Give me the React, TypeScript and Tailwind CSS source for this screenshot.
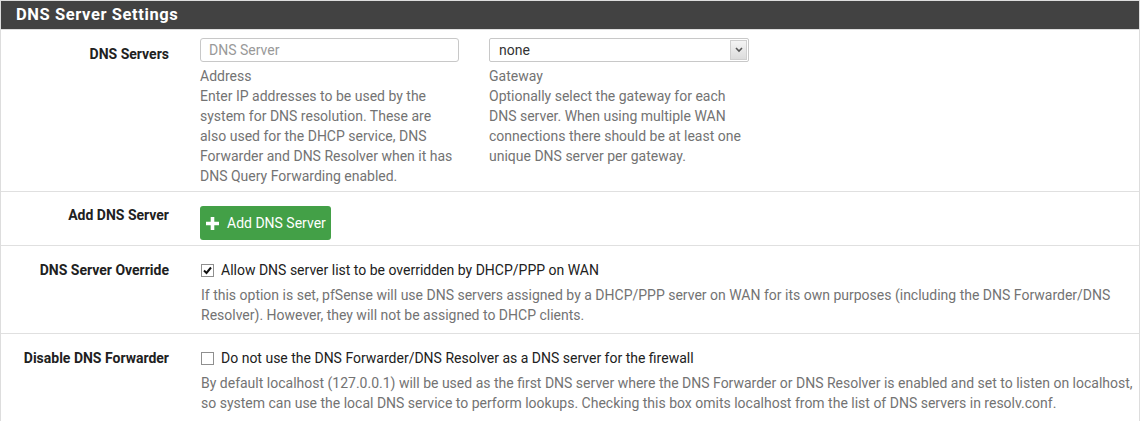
const font = { fontFamily: "Roboto, 'Liberation Sans', sans-serif" };

function Label({ children, pt }: { children: string; pt: string }) {
  return (
    <div className={`w-[183px] shrink-0 pr-[15px] text-right text-[14px] font-bold leading-5 text-[#212121] ${pt}`}>
      {children}
    </div>
  );
}

function Check({ checked }: { checked?: boolean }) {
  return (
    <span className="flex h-[13px] w-[13px] shrink-0 items-center justify-center border border-[#8f8f8f] bg-white">
      {checked && (
        <svg width="9" height="9" viewBox="0 0 9 9">
          <path d="M1 4.5 L3.5 7 L8 1.5" fill="none" stroke="#111" strokeWidth="2" />
        </svg>
      )}
    </span>
  );
}

export default function App() {
  return (
    <div style={font} className="w-[1140px] bg-white">
      <div className="border border-[#ddd] border-b-0">
        <div className="flex h-[28px] items-center bg-[#424242] pl-[15px] text-[16.5px] font-bold tracking-[0.6px] text-white">
          DNS Server Settings
        </div>
      </div>
      <div className="border-x border-t border-[#ddd]">
        {/* DNS Servers */}
        <div className="flex border-b border-[#e0e0e0] pb-[5px]">
          <Label pt="pt-[14px]">DNS Servers</Label>
          <div className="flex gap-[30px] pl-[16px] pt-[8px]">
            <div className="w-[259px]">
              <div className="flex h-[24px] items-center rounded-[3px] border border-[#c8c8c8] px-[8px] text-[14px] text-[#999]">
                DNS Server
              </div>
              <div className="mt-[4px] text-[14px] leading-5 text-[#737373]">
                <div>Address</div>
                <div>
                  Enter IP addresses to be used by the system for DNS resolution. These are also used for the DHCP
                  service, DNS Forwarder and DNS Resolver when it has DNS Query Forwarding enabled.
                </div>
              </div>
            </div>
            <div className="w-[260px]">
              <div className="flex h-[24px] items-center justify-between rounded-[2px] border border-[#c8c8c8] pl-[9px] text-[14px] text-[#333]">
                <span>none</span>
                <span className="m-[1px] flex h-[20px] w-[17px] items-center justify-center border border-[#cfcfcf] bg-gradient-to-b from-[#f4f4f4] to-[#dcdcdc]">
                  <svg width="8" height="6" viewBox="0 0 8 6">
                    <path d="M1 1 L4 4 L7 1" fill="none" stroke="#555" strokeWidth="1.6" />
                  </svg>
                </span>
              </div>
              <div className="mt-[4px] text-[14px] leading-5 text-[#737373]">
                <div>Gateway</div>
                <div>
                  Optionally select the gateway for each DNS server. When using multiple WAN connections there should
                  be at least one unique DNS server per gateway.
                </div>
              </div>
            </div>
          </div>
        </div>

        {/* Add DNS Server */}
        <div className="flex border-b border-[#e0e0e0] pb-[5px]">
          <Label pt="pt-[13px]">Add DNS Server</Label>
          <div className="pl-[16px] pt-[14px]">
            <button className="flex h-[34px] w-[131px] items-center gap-[8px] rounded-[3px] bg-[#43a047] pl-[6px] text-[14px] text-white">
              <svg width="13" height="13" viewBox="0 0 13 13">
                <path d="M6.5 0 V13 M0 6.5 H13" stroke="#fff" strokeWidth="3.6" />
              </svg>
              Add DNS Server
            </button>
          </div>
        </div>

        {/* DNS Server Override */}
        <div className="flex border-b border-[#e0e0e0] pb-[8px]">
          <Label pt="pt-[14px]">DNS Server Override</Label>
          <div className="pl-[17px] pt-[14px] pr-[6px]">
            <div className="flex h-5 items-center gap-[7px] text-[14px] text-[#212121]">
              <Check checked />
              Allow DNS server list to be overridden by DHCP/PPP on WAN
            </div>
            <div className="mt-[5px] text-[14px] leading-5 text-[#737373]">
              If this option is set, pfSense will use DNS servers assigned by a DHCP/PPP server on WAN for its own
              purposes (including the DNS Forwarder/DNS Resolver). However, they will not be assigned to DHCP clients.
            </div>
          </div>
        </div>

        {/* Disable DNS Forwarder */}
        <div className="flex pb-[8px]">
          <Label pt="pt-[14px]">Disable DNS Forwarder</Label>
          <div className="pl-[17px] pt-[14px] pr-[6px]">
            <div className="flex h-5 items-center gap-[7px] text-[14px] text-[#212121]">
              <Check />
              Do not use the DNS Forwarder/DNS Resolver as a DNS server for the firewall
            </div>
            <div className="mt-[5px] text-[14px] leading-5 text-[#737373]">
              By default localhost (127.0.0.1) will be used as the first DNS server where the DNS Forwarder or DNS
              Resolver is enabled and set to listen on localhost, so system can use the local DNS service to perform
              lookups. Checking this box omits localhost from the list of DNS servers in resolv.conf.
            </div>
          </div>
        </div>
      </div>
    </div>
  );
}
